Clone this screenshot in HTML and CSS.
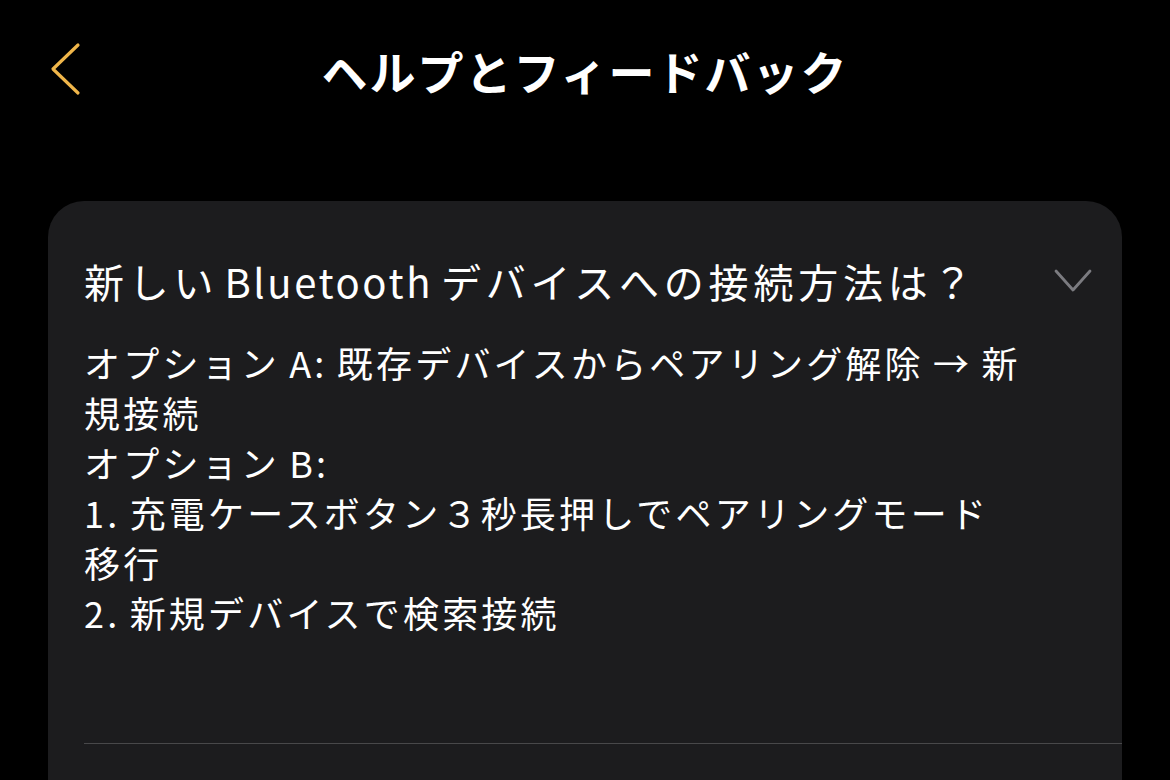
FILE: index.html
```html
<!DOCTYPE html>
<html lang="ja">
<head>
<meta charset="utf-8">
<link rel="stylesheet" href="styles.css">
</head>
<body>
<header class="nav">
  <button class="back" aria-label="戻る">
    <svg width="40" height="60" viewBox="0 0 40 60"><path d="M32 5 L7 29 L32 53" fill="none" stroke="#f0b64a" stroke-width="3.2" stroke-linecap="round" stroke-linejoin="round"/></svg>
  </button>
  <h1 class="title">ヘルプとフィードバック</h1>
</header>
<main class="content">
  <section class="card">
    <div class="question">
      <span class="q-text">新しい<span class="latin">Bluetooth</span>デバイスへの接続方法は？</span>
      <svg class="chev" width="40" height="30" viewBox="0 0 40 30"><path d="M4 5 L21 24 L38 5" fill="none" stroke="#7b7b80" stroke-width="2.8" stroke-linecap="round" stroke-linejoin="round"/></svg>
    </div>
    <p class="answer">オプション A: 既存デバイスからペアリング解除 → 新<br>規接続<br>オプション B:<br>1. 充電ケースボタン３秒長押しでペアリングモード<br>移行<br>2. 新規デバイスで検索接続</p>
    <div class="divider"></div>
  </section>
</main>
</body>
</html>
```

FILE: styles.css
```css
html, body {
  margin: 0;
  padding: 0;
  background: #000;
  color: #fff;
  font-family: "Noto Sans CJK JP", "Noto Sans", sans-serif;
  overflow: hidden;
  height: 780px;
}
.nav {
  position: relative;
  height: 140px;
  display: flex;
  align-items: center;
  justify-content: center;
}
.back {
  position: absolute;
  left: 46px;
  top: 40px;
  background: none;
  border: 0;
  padding: 0;
  width: 40px;
  height: 60px;
}
.back svg { display: block; }
.title {
  margin: 0;
  font-size: 46px;
  font-weight: 600;
  letter-spacing: 2px;
  line-height: 1;
}
.content {
  padding: 61px 48px 0;
}
.card {
  background: #1c1c1e;
  border-radius: 36px 36px 0 0;
  height: 600px;
}
.question {
  display: flex;
  align-items: center;
  justify-content: space-between;
  padding: 52px 30px 0 36px;
  height: 56px;
}
.q-text {
  font-size: 40px;
  line-height: 56px;
  font-weight: 400;
  letter-spacing: 4.8px;
  white-space: nowrap;
}
.latin {
  letter-spacing: 2.6px;
  margin: 0 8px 0 6px;
}
.chev { display: block; }
.answer {
  margin: 0;
  padding: 28px 36px 0 36px;
  font-size: 36px;
  line-height: 50px;
  letter-spacing: 3.2px;
  word-spacing: -2px;
  height: 406px;
  white-space: nowrap;
}
.divider {
  margin-left: 36px;
  height: 1px;
  background: #48484a;
}
```
